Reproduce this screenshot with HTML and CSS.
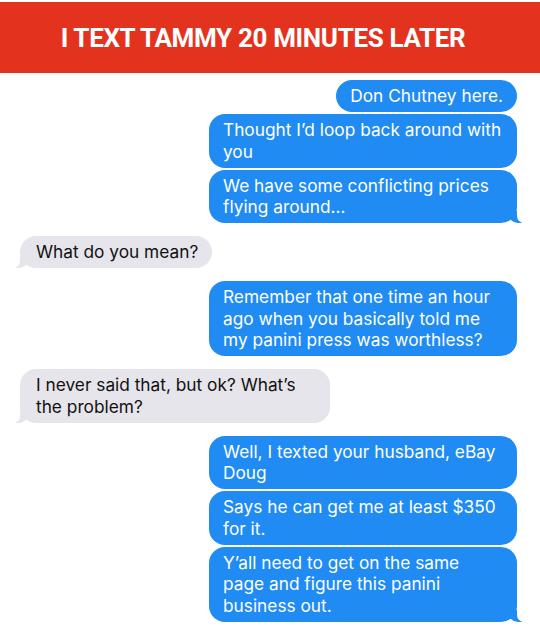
FILE: index.html
```html
<!DOCTYPE html>
<html>
<head>
<meta charset="utf-8">
<link rel="stylesheet" href="styles.css">
</head>
<body>
<div class="page">
  <header class="banner"><h1 class="title">I TEXT TAMMY 20 MINUTES LATER</h1></header>
  <main class="thread">
    <div class="group sent">
      <div class="bubble">Don Chutney here.</div>
      <div class="bubble">Thought I’d loop back around with you</div>
      <div class="bubble tail">We have some conflicting prices flying around…</div>
    </div>
    <div class="group received">
      <div class="bubble tail">What do you mean?</div>
    </div>
    <div class="group sent">
      <div class="bubble">Remember that one time an hour ago when you basically told me my panini press was worthless?</div>
    </div>
    <div class="group received">
      <div class="bubble tail">I never said that, but ok? What’s the problem?</div>
    </div>
    <div class="group sent">
      <div class="bubble">Well, I texted your husband, eBay Doug</div>
      <div class="bubble">Says he can get me at least $350 for it.</div>
      <div class="bubble tail">Y’all need to get on the same page and figure this panini business out.</div>
    </div>
  </main>
</div>
</body>
</html>
```

FILE: styles.css
```css
html, body {
  margin: 0;
  padding: 0;
  background: #ffffff;
}
.page {
  padding-top: 2px;
  font-family: Inter, "Noto Sans", sans-serif;
}
.banner {
  background: #e3331f;
  height: 71px;
  display: flex;
  align-items: center;
  justify-content: center;
}
.title {
  margin: 0;
  padding-right: 14px;
  color: #ffffff;
  font-family: Roboto, "Liberation Sans", Arial, sans-serif;
  font-weight: 700;
  font-size: 26px;
  letter-spacing: -0.35px;
}
.thread {
  display: flex;
  flex-direction: column;
  gap: 13px;
  padding: 7px 23px 0 20px;
}
.group {
  display: flex;
  flex-direction: column;
  gap: 2px;
}
.group.sent { align-items: flex-end; }
.group.received { align-items: flex-start; }
.bubble {
  position: relative;
  max-width: 280px;
  padding: 5px 14px 5.5px 14px;
  border-radius: 16px;
  font-size: 17.3px;
  line-height: 21.5px;
}
.sent .bubble {
  background: #1f8bf3;
  color: #ffffff;
}
.received .bubble {
  background: #e6e5eb;
  color: #111111;
  padding-left: 16px;
}
.sent .tail::before {
  content: "";
  position: absolute;
  bottom: 0;
  right: -5px;
  width: 14px;
  height: 12px;
  background: #1f8bf3;
  border-bottom-left-radius: 10px;
}
.sent .tail::after {
  content: "";
  position: absolute;
  bottom: 0;
  right: -9px;
  width: 9px;
  height: 12px;
  background: #ffffff;
  border-bottom-left-radius: 7px;
}
.received .tail::before {
  content: "";
  position: absolute;
  bottom: 0;
  left: -5px;
  width: 14px;
  height: 12px;
  background: #e6e5eb;
  border-bottom-right-radius: 10px;
}
.received .tail::after {
  content: "";
  position: absolute;
  bottom: 0;
  left: -9px;
  width: 9px;
  height: 12px;
  background: #ffffff;
  border-bottom-right-radius: 7px;
}
```
